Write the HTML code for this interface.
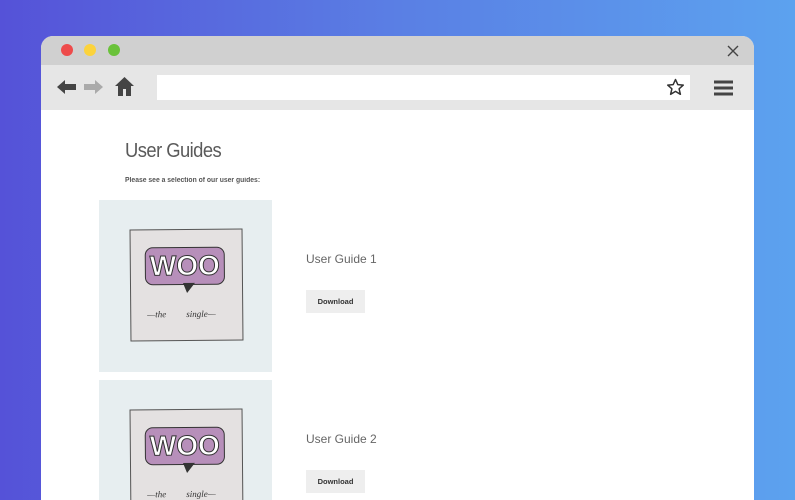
<!DOCTYPE html>
<html><head><style>
*{margin:0;padding:0;box-sizing:border-box}
html,body{width:795px;height:500px;overflow:hidden}
body{background:linear-gradient(90deg,#5552d8 0%,#5a7fe4 50%,#5ca2ef 100%);font-family:"Liberation Sans",sans-serif;position:relative}
.win{position:absolute;left:41px;top:36px;width:713px;height:464px;background:#fff;border-radius:12px 12px 0 0;overflow:hidden}
.title{position:absolute;left:0;top:0;width:100%;height:29px;background:#d0d0d0}
.dot{position:absolute;top:8px;width:12px;height:12px;border-radius:50%}
.tool{position:absolute;left:0;top:29px;width:100%;height:45px;background:#e6e6e6}
.url{position:absolute;left:116px;top:10px;width:533px;height:25px;background:#fff}
.h1{position:absolute;left:84px;top:104px;font-size:20px;color:#5a5a5a;letter-spacing:-0.6px;transform:scaleX(0.92);transform-origin:left}
.sub{position:absolute;left:84px;top:141px;font-size:7px;color:#555;font-weight:bold;transform:scaleX(0.97);transform-origin:left}
.img{position:absolute;left:58px;width:173px;height:172px;background:#e7eef0}
.card{position:absolute;left:31px;top:29px;width:113px;height:112px;background:#e4e1e1;border:1px solid #555;transform:rotate(-0.5deg)}
.bub{position:absolute;left:14px;top:17px;width:80px;height:38px;background:#b78fba;border:1.5px solid #333;border-radius:8px;color:#fff;font-weight:bold;font-size:28px;text-align:center;line-height:36px;letter-spacing:0px;-webkit-text-stroke:1px #333}
.tail{position:absolute;left:52px;top:53px;width:0;height:0;border-left:4px solid transparent;border-right:8px solid transparent;border-top:10px solid #333}
.hand{position:absolute;top:79px;font-family:"Liberation Serif",serif;font-style:italic;font-size:9px;color:#333}
.g{position:absolute;left:265px;font-size:12px;color:#666}
.btn{position:absolute;left:265px;width:59px;height:23px;background:#eee;font-size:7.5px;color:#333;font-weight:bold;text-align:center;line-height:23px}
</style></head><body>
<div class="win">
 <div class="title">
  <div class="dot" style="left:20px;background:#ee4b4b"></div>
  <div class="dot" style="left:43px;background:#fcd33c"></div>
  <div class="dot" style="left:67px;background:#6ac23a"></div>
  <svg style="position:absolute;left:686px;top:9px" width="12" height="12"><path d="M1 1L11 11M11 1L1 11" stroke="#444" stroke-width="1.4"/></svg>
 </div>
 <div class="tool">
  <svg style="position:absolute;left:16px;top:15px" width="20" height="14"><path d="M0 7L8 0V4H19V10H8V14Z" fill="#444"/></svg>
  <svg style="position:absolute;left:42px;top:15px" width="20" height="14"><path d="M20 7L12 0V4H1V10H12V14Z" fill="#aaa"/></svg>
  <svg style="position:absolute;left:74px;top:12px" width="19" height="20"><path d="M9.5 0L0 9H3V19H8V12H11V19H16V9H19Z" fill="#444"/></svg>
  <div class="url"></div>
  <svg style="position:absolute;left:625px;top:13px" width="19" height="18"><path d="M9.5 1.5L11.8 6.6 17.3 7.1 13.1 10.8 14.4 16.3 9.5 13.4 4.6 16.3 5.9 10.8 1.7 7.1 7.2 6.6Z" fill="none" stroke="#333" stroke-width="1.5" stroke-linejoin="round"/></svg>
  <svg style="position:absolute;left:673px;top:15px" width="20" height="16"><path d="M0 2H19M0 8H19M0 14H19" stroke="#444" stroke-width="3"/></svg>
 </div>
 <div class="h1">User Guides</div>
 <div class="sub">Please see a selection of our user guides:</div>
 <div class="img" style="top:164px"><div class="card"><div class="bub">WOO</div><div class="tail"></div><div class="hand" style="left:16px">—the</div><div class="hand" style="left:55px">single—</div></div></div>
 <div class="img" style="top:344px"><div class="card"><div class="bub">WOO</div><div class="tail"></div><div class="hand" style="left:16px">—the</div><div class="hand" style="left:55px">single—</div></div></div>
 <div class="g" style="top:216px">User Guide 1</div>
 <div class="btn" style="top:254px">Download</div>
 <div class="g" style="top:396px">User Guide 2</div>
 <div class="btn" style="top:434px">Download</div>
</div>
</body></html>
